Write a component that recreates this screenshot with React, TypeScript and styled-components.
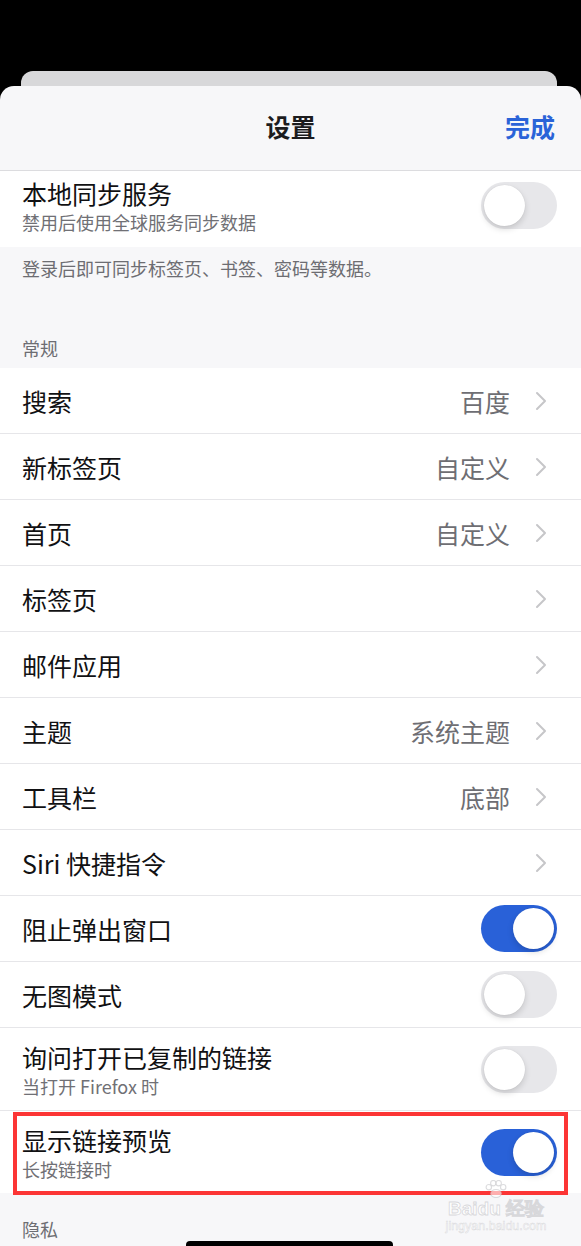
import React from 'react';
import styled, { createGlobalStyle } from 'styled-components';

const GlobalStyle = createGlobalStyle`
  html, body {
    margin: 0;
    padding: 0;
    background: #000;
  }
  body {
    font-family: "Noto Sans CJK SC", "Noto Sans", sans-serif;
    -webkit-font-smoothing: antialiased;
  }
`;

const Screen = styled.div`
  position: relative;
  width: 581px;
  height: 1246px;
  overflow: hidden;
  background: #000;
  padding-top: 71px;
  box-sizing: border-box;
`;

const BackCard = styled.div`
  margin: 0 24px 0 21px;
  height: 15px;
  background: #d8d8da;
  border-radius: 12px 12px 0 0;
`;

const Sheet = styled.div`
  background: #f7f7f9;
  border-radius: 14px 14px 0 0;
  height: 1160px;
  overflow: hidden;
`;

const NavBar = styled.div`
  height: 84px;
  display: grid;
  grid-template-columns: 1fr auto 1fr;
  align-items: center;
  padding: 0 26px;
  border-bottom: 1px solid #dcdcdf;
`;

const NavTitle = styled.div`
  grid-column: 2;
  font-size: 25px;
  font-weight: 700;
  color: #1c1c1e;
  margin-top: -4px;
`;

const DoneButton = styled.div`
  justify-self: end;
  font-size: 25px;
  font-weight: 700;
  color: #2a63d8;
  margin-top: -4px;
`;

const Group = styled.div`
  background: #fff;
`;

const RowWrap = styled.div`
  position: relative;
  border-bottom: 1px solid #e6e6e9;
  &:last-child {
    border-bottom: none;
  }
`;

const Row = styled.div<{ $tall?: boolean; $top?: boolean }>`
  display: flex;
  align-items: center;
  box-sizing: border-box;
  height: ${(p) => (p.$top ? '76px' : p.$tall ? '82px' : '65px')};
  padding: ${(p) => (p.$top ? '0 24px 8px 22px' : '0 24px 0 22px')};
`;

const Highlight = styled.div`
  position: absolute;
  left: 13px;
  right: 13px;
  top: 1px;
  bottom: -2px;
  border: 4px solid #fc3535;
  pointer-events: none;
`;

const Labels = styled.div`
  flex: 1;
  display: flex;
  flex-direction: column;
  gap: 1px;
`;

const Title = styled.div`
  font-size: 25px;
  line-height: 32px;
  color: #111113;
`;

const Subtitle = styled.div`
  font-size: 18px;
  line-height: 24px;
  color: #707075;
`;

const Value = styled.div`
  font-size: 25px;
  color: #6e6e73;
  margin-right: 25px;
`;

const Chevron = styled.svg`
  width: 12px;
  height: 20px;
  margin-right: 10px;
`;

const Toggle = styled.div<{ $on?: boolean }>`
  position: relative;
  width: 76px;
  height: 47px;
  border-radius: 24px;
  background: ${(p) => (p.$on ? '#2961d8' : '#e7e7ea')};
  flex-shrink: 0;
`;

const Knob = styled.div<{ $on?: boolean }>`
  position: absolute;
  top: 3px;
  left: ${(p) => (p.$on ? '32px' : '3px')};
  width: 41px;
  height: 41px;
  border-radius: 50%;
  background: #fff;
  box-shadow: 0 3px 6px rgba(0, 0, 0, 0.15), 0 0 1px rgba(0, 0, 0, 0.12);
`;

const Footer = styled.div`
  padding: 8px 22px 0;
  font-size: 18px;
  line-height: 26px;
  color: #6d6d72;
  height: 55px;
`;

const SectionHeader = styled.div<{ $pad?: number }>`
  padding: 0 22px 8px;
  padding-top: ${(p) => p.$pad ?? 26}px;
  font-size: 18px;
  line-height: 24px;
  color: #6d6d72;
`;

const HomeBar = styled.div`
  position: absolute;
  left: 186px;
  bottom: -3px;
  width: 207px;
  height: 8px;
  border-radius: 4px;
  background: #000;
`;

const Watermark = styled.div`
  position: absolute;
  left: 442px;
  top: 1180px;
  width: 108px;
  display: flex;
  flex-direction: column;
  align-items: center;
  font-family: "Liberation Sans", sans-serif;
  white-space: nowrap;
  pointer-events: none;
`;

const MarkBrand = styled.div`
  font-size: 19px;
  font-weight: 700;
  line-height: 21px;
  color: rgba(255, 255, 255, 0.75);
  -webkit-text-stroke: 0.8px rgba(180, 180, 185, 0.5);
`;

const MarkUrl = styled.div`
  font-size: 12.5px;
  line-height: 15px;
  color: rgba(255, 255, 255, 0.7);
  -webkit-text-stroke: 0.5px rgba(185, 185, 190, 0.5);
`;

function ChevronIcon() {
  return (
    <Chevron viewBox="0 0 12 20">
      <path d="M2 2 L10 10 L2 18" fill="none" stroke="#c6c6c9" strokeWidth="2" strokeLinecap="round" strokeLinejoin="round" />
    </Chevron>
  );
}

function Switch({ on }: { on?: boolean }) {
  return (
    <Toggle $on={on}>
      <Knob $on={on} />
    </Toggle>
  );
}

type Item = { title: string; value?: string; sub?: string; toggle?: boolean; on?: boolean; mark?: boolean };

const general: Item[] = [
  { title: '搜索', value: '百度' },
  { title: '新标签页', value: '自定义' },
  { title: '首页', value: '自定义' },
  { title: '标签页' },
  { title: '邮件应用' },
  { title: '主题', value: '系统主题' },
  { title: '工具栏', value: '底部' },
  { title: 'Siri 快捷指令' },
  { title: '阻止弹出窗口', toggle: true, on: true },
  { title: '无图模式', toggle: true },
  { title: '询问打开已复制的链接', sub: '当打开 Firefox 时', toggle: true },
  { title: '显示链接预览', sub: '长按链接时', toggle: true, on: true, mark: true },
];

function SettingRow({ item }: { item: Item }) {
  return (
    <RowWrap>
      <Row $tall={!!item.sub}>
        <Labels>
          <Title>{item.title}</Title>
          {item.sub && <Subtitle>{item.sub}</Subtitle>}
        </Labels>
        {item.value && <Value>{item.value}</Value>}
        {item.toggle ? <Switch on={item.on} /> : <ChevronIcon />}
      </Row>
      {item.mark && <Highlight />}
    </RowWrap>
  );
}

export default function App() {
  return (
    <>
      <GlobalStyle />
      <Screen>
        <BackCard />
        <Sheet>
          <NavBar>
            <NavTitle>设置</NavTitle>
            <DoneButton>完成</DoneButton>
          </NavBar>
          <Group>
            <Row $top>
              <Labels>
                <Title>本地同步服务</Title>
                <Subtitle>禁用后使用全球服务同步数据</Subtitle>
              </Labels>
              <Switch />
            </Row>
          </Group>
          <Footer>登录后即可同步标签页、书签、密码等数据。</Footer>
          <SectionHeader>常规</SectionHeader>
          <Group>
            {general.map((item) => (
              <SettingRow key={item.title} item={item} />
            ))}
          </Group>
          <SectionHeader $pad={24}>隐私</SectionHeader>
        </Sheet>
        <Watermark>
          <svg width="30" height="18" viewBox="0 0 28 20">
            <g fill="rgba(255,255,255,0.6)" stroke="rgba(185,185,190,0.5)" strokeWidth="1.2">
              <circle cx="6" cy="8" r="3" />
              <circle cx="11" cy="3.5" r="3" />
              <circle cx="17" cy="3.5" r="3" />
              <circle cx="22" cy="8" r="3" />
              <ellipse cx="14" cy="15" rx="6" ry="4.5" />
            </g>
          </svg>
          <MarkBrand>Baidu 经验</MarkBrand>
          <MarkUrl>jingyan.baidu.com</MarkUrl>
        </Watermark>
        <HomeBar />
      </Screen>
    </>
  );
}
